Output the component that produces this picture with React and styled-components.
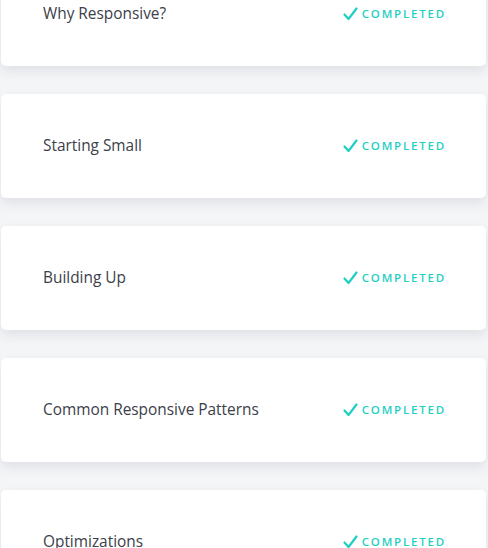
import React from 'react';
import styled, { createGlobalStyle } from 'styled-components';

const GlobalStyle = createGlobalStyle`
  *, *::before, *::after {
    box-sizing: border-box;
  }

  body {
    margin: 0;
    background-color: #f4f5f7;
    font-family: "Open Sans", "Noto Sans", sans-serif;
    overflow: hidden;
  }
`;

const List = styled.div`
  display: flex;
  flex-direction: column;
  gap: 28px;
  margin-top: -38px;
  padding: 0 2px 0 1px;
`;

const Card = styled.div`
  height: 104px;
  background-color: #ffffff;
  border-radius: 5px;
  box-shadow: 0 5px 12px rgba(40, 50, 70, 0.1);
  display: flex;
  align-items: center;
  justify-content: space-between;
  padding: 0 40px 1px 42px;
`;

const Title = styled.span`
  font-size: 15.4px;
  color: #3c4049;
`;

const Status = styled.span`
  display: flex;
  align-items: center;
  gap: 4px;
  color: #1fcfc3;
  font-size: 11.5px;
  font-weight: 600;
  letter-spacing: 1.8px;
`;

const Check = () => (
  <svg width="15" height="14" viewBox="0 0 15 14">
    <path d="M1.5 7.5 L5.5 12 L13.5 1.5" fill="none" stroke="#1fcfc3" strokeWidth="2.2" strokeLinecap="round" strokeLinejoin="round" />
  </svg>
);

const lessons = [
  'Why Responsive?',
  'Starting Small',
  'Building Up',
  'Common Responsive Patterns',
  'Optimizations',
];

const App = () => (
  <>
    <GlobalStyle />
    <List>
      {lessons.map((name) => (
        <Card key={name}>
          <Title>{name}</Title>
          <Status>
            <Check />
            COMPLETED
          </Status>
        </Card>
      ))}
    </List>
  </>
);

export default App;
